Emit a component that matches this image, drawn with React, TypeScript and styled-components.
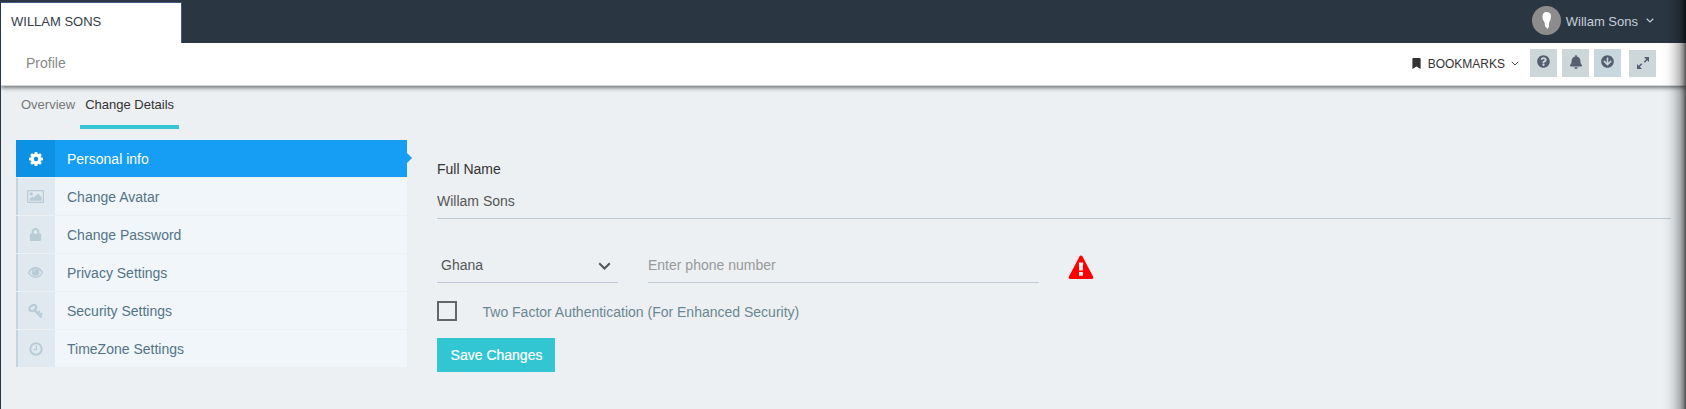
import React from "react";
import styled, { createGlobalStyle } from "styled-components";
import { FaBell, FaArrowCircleDown, FaQuestionCircle, FaLock, FaBookmark } from "react-icons/fa";

const GlobalStyle = createGlobalStyle`
  * { box-sizing: border-box; }
  body {
    margin: 0;
    overflow: hidden;
    font-family: "Liberation Sans", Arial, sans-serif;
    font-size: 14px;
    background: #ecf0f3;
  }
`;

const Page = styled.div`
  position: relative;
  height: 409px;
  border-left: 1px solid #2b3643;
  overflow: hidden;
`;

const TopBar = styled.header`
  position: relative;
  z-index: 1;
  display: flex;
  justify-content: space-between;
  height: 43px;
  background: #2b3643;
`;

const AccountTab = styled.div`
  width: 181px;
  height: 41px;
  margin-top: 2px;
  padding: 11px 10px 0;
  border: 1px solid #3f5b82;
  border-width: 1px 1px 0 0;
  background: #fff;
  color: #333c48;
  font-size: 13px;
  line-height: 15px;
`;

const UserMenu = styled.div`
  display: flex;
  align-items: center;
  height: 41px;
  margin-right: 32px;
  color: #c6cfda;
  font-size: 13px;
  svg { display: block; }
`;

const UserName = styled.span`
  margin: 2px 8px 0 5px;
`;

const SubBar = styled.div`
  position: relative;
  display: flex;
  justify-content: space-between;
  height: 43px;
  padding-left: 25px;
  background: #fff;
  border-bottom: 1px solid #d5d8da;
  box-shadow: 0 2px 4px 0 rgba(0, 0, 0, 0.5);
`;

const Title = styled.h1`
  margin: 12px 0 0;
  color: #888;
  font-size: 14px;
  font-weight: 400;
  line-height: 16px;
`;

const Tools = styled.div`
  display: flex;
  margin-right: 30px;
`;

const Bookmarks = styled.div`
  display: flex;
  height: 41px;
  align-items: center;
  margin-right: 11px;
  color: #333;
  font-size: 12px;
  svg { display: block; }
`;

const BookmarksLabel = styled.span`
  margin: 1px 6px 0 6px;
`;

const ToolButton = styled.button<{ $tint?: string; $gap?: number; $drop?: number }>`
  display: flex;
  justify-content: center;
  padding: 6px 0 0;
  width: 27px;
  height: ${(p) => 28 - (p.$drop ?? 0)}px;
  margin: ${(p) => 6 + (p.$drop ?? 0)}px 0 0 ${(p) => p.$gap ?? 5}px;
  border: 0;
  background: ${(p) => p.$tint ?? "#cdd7da"};
  color: #555f70;
`;

const Tabs = styled.nav`
  display: flex;
  height: 54px;
  padding: 0 0 0 15px;
`;

const Tab = styled.a<{ $active?: boolean }>`
  height: 43px;
  padding: 11px 5px 0;
  border-bottom: 4px solid ${(p) => (p.$active ? "#36c6d3" : "transparent")};
  color: ${(p) => (p.$active ? "#333" : "#777")};
  font-size: 13px;
  line-height: 15px;
  white-space: nowrap;
  & + & {
    width: 99px;
  }
`;

const Content = styled.div`
  display: flex;
  padding-left: 15px;
`;

const Menu = styled.ul`
  width: 391px;
  margin: 0;
  padding: 0;
  list-style: none;
`;

const MenuItem = styled.li<{ $active?: boolean }>`
  position: relative;
  display: flex;
  height: 37px;
  margin-bottom: 1px;
  background: ${(p) => (p.$active ? "#169ef4" : "#f0f6fa")};
  color: ${(p) => (p.$active ? "#fff" : "#557386")};
  line-height: 38px;
  ${(p) =>
    p.$active &&
    `&::after {
      content: "";
      position: absolute;
      left: 100%;
      top: 13px;
      border: 5px solid transparent;
      border-right: 0;
      border-left-color: #169ef4;
    }`}
`;

const MenuIcon = styled.span<{ $active?: boolean }>`
  display: flex;
  align-items: center;
  justify-content: center;
  width: 39px;
  height: 37px;
  margin-right: 12px;
  padding-right: 2px;
  border-left: 2px solid ${(p) => (p.$active ? "#0c91e5" : "#c4d5df")};
  background: ${(p) => (p.$active ? "#0c91e5" : "#e0e9f0")};
  color: ${(p) => (p.$active ? "#fff" : "#b9cbd5")};
`;

const Form = styled.form`
  flex: 1;
  margin: 21px 15px 0 30px;
`;

const Label = styled.label`
  display: block;
  color: #333;
  line-height: 16px;
`;

const Input = styled.input`
  display: block;
  width: 100%;
  height: 34px;
  padding: 0 0 1px;
  border: 0;
  border-bottom: 1px solid #c2cad8;
  outline: 0;
  background: transparent;
  color: #555;
  font: inherit;
  &::placeholder { color: #999; opacity: 1; }
`;

const NameInput = styled(Input)`
  margin-top: 8px;
  border-bottom-color: #bdc9d5;
`;

const PhoneRow = styled.div`
  display: flex;
  margin-top: 30px;
`;

const Country = styled.div`
  display: flex;
  align-items: center;
  justify-content: space-between;
  width: 181px;
  height: 34px;
  margin-right: 30px;
  padding: 0 7px 1px 4px;
  border-bottom: 1px solid #c2c6d8;
  color: #555;
  svg { margin-top: 3px; }
`;

const PhoneField = styled.div`
  width: 391px;
  margin-right: 29px;
`;

const WarningIcon = styled.svg`
  display: block;
  margin-top: 6px;
`;

const TwoFactor = styled.div`
  display: flex;
  height: 20px;
  margin-top: 18px;
  color: #6b8790;
  line-height: 22px;
`;

const Checkbox = styled.span`
  width: 20px;
  height: 20px;
  margin-right: 25.5px;
  border: 2px solid #666;
`;

const SaveButton = styled.button`
  width: 118px;
  height: 34px;
  margin-top: 17px;
  padding: 0 0 0 1px;
  border: 0;
  background: #32c5d2;
  color: #fff;
  font: inherit;
  -webkit-text-stroke: 0.2px #fff;
`;

const EdgeShadow = styled.div`
  position: absolute;
  z-index: 2;
  top: 0;
  right: 0;
  bottom: 0;
  width: 24px;
  pointer-events: none;
  background: linear-gradient(
    to right,
    rgba(0, 0, 0, 0) 0%,
    rgba(0, 0, 0, 0.03) 25%,
    rgba(0, 0, 0, 0.12) 50%,
    rgba(0, 0, 0, 0.27) 75%,
    rgba(0, 0, 0, 0.43) 88%,
    rgba(0, 0, 0, 0.68) 100%
  );
`;

const Chevron = ({ size = 8, weight = 1.2 }: { size?: number; weight?: number }) => (
  <svg width={size} height={size * 0.65} viewBox="0 0 12 8" fill="none" stroke="currentColor" strokeWidth={(weight * 12) / size}>
    <path d="M1 1.2l5 5 5-5" />
  </svg>
);

const Avatar = () => (
  <svg width="29" height="29" viewBox="0 0 29 29">
    <circle cx="14.500" cy="14.500" r="14.500" fill="#8c8c8c" />
    <path d="M14.500 6c2.800 0 4.400 1.300 4.400 3.600 0 1.500.1 3-.6 4.600-.5 1.200-1.200 1.700-1.300 2.800v3.500l-1.500 2.500-2.400-2.800c-.4-1.500.1-2.500-.8-4.200-1-1.600-1.900-2.600-1.800-5.400C10.600 7.800 11.700 6 14.500 6z" fill="#fff" />
  </svg>
);

const ExpandIcon = () => (
  <svg width="12" height="13" viewBox="0 0 12 13" fill="currentColor">
    <path d="M7 1h5v5l-1.700-1.700-2.500 2.500-1.100-1.100 2.500-2.500z" />
    <path d="M5 13H0V8l1.700 1.700 2.500-2.500 1.100 1.100-2.500 2.500z" />
  </svg>
);

const GearIcon = () => (
  <svg width="14" height="14" viewBox="-7 -7 14 14" fill="currentColor">
    <circle r="3.800" fill="none" stroke="currentColor" strokeWidth="3.200" />
    {[0, 45, 90, 135, 180, 225, 270, 315].map((a) => (
      <path key={a} d="M-1.700-4.500L-1.300-7H1.300L1.700-4.500z" transform={`rotate(${a})`} />
    ))}
  </svg>
);

const PictureIcon = () => (
  <svg width="17" height="13" viewBox="0 0 17 13" fill="currentColor">
    <path fillRule="evenodd" d="M1.200 0h14.600Q17 0 17 1.200v10.600q0 1.200-1.200 1.200H1.200Q0 13 0 11.800V1.200Q0 0 1.200 0zm.3 1.200q-.3 0-.3.300v10q0 .3.300.3h14q.3 0 .3-.3v-10q0-.3-.3-.3z" />
    <circle cx="4.200" cy="3.900" r="1.700" />
    <path d="M2.500 10.800V9l2.800-2.800 1.500 1.500L11 3.500l3.700 3.700v3.600z" />
  </svg>
);

const EyeIcon = () => (
  <svg width="15" height="11" viewBox="0 0 15 11">
    <path d="M.7 5.500C2.300 2.400 4.700.8 7.500.8s5.200 1.600 6.800 4.700c-1.600 3.100-4 4.700-6.800 4.700S2.300 8.600.7 5.500z" fill="none" stroke="currentColor" strokeWidth="1.400" />
    <circle cx="7.500" cy="4.900" r="3.900" fill="currentColor" />
    <path d="M5.500 4.600c0-1.200.8-2 2-2" fill="none" stroke="#e0e9f0" strokeWidth=".7" strokeLinecap="round" />
  </svg>
);

const KeyIcon = () => (
  <svg width="15" height="14" viewBox="0 0 15 14" fill="none" stroke="currentColor" strokeWidth="2.200">
    <ellipse cx="4.800" cy="4" rx="3.700" ry="2.700" transform="rotate(-35 4.800 4)" />
    <path d="M6.600 5.400l6.600 6.800q.4.700-.4 1.100L6.200 6.800z" strokeWidth="1.200" fill="currentColor" />
    <path d="M10.200 8.900l1.700-1.700M12.200 11l1.900-1.900" strokeWidth="2.100" />
  </svg>
);

const ClockIcon = () => (
  <svg width="14" height="14" viewBox="0 0 14 14" fill="none" stroke="currentColor">
    <circle cx="7" cy="7" r="5.700" strokeWidth="2" />
    <path d="M7.400 3.600v4H4.500" strokeWidth="1.300" />
  </svg>
);

const sections: { label: string; icon: React.ReactNode; active?: boolean }[] = [
  { label: "Personal info", icon: <GearIcon />, active: true },
  { label: "Change Avatar", icon: <PictureIcon /> },
  { label: "Change Password", icon: <FaLock size={13} /> },
  { label: "Privacy Settings", icon: <EyeIcon /> },
  { label: "Security Settings", icon: <KeyIcon /> },
  { label: "TimeZone Settings", icon: <ClockIcon /> },
];

export default function App() {
  return (
    <>
      <GlobalStyle />
      <Page>
        <TopBar>
          <AccountTab>WILLAM SONS</AccountTab>
          <UserMenu>
            <Avatar />
            <UserName>Willam Sons</UserName>
            <Chevron />
          </UserMenu>
        </TopBar>
        <SubBar>
          <Title>Profile</Title>
          <Tools>
            <Bookmarks>
              <FaBookmark size={11} />
              <BookmarksLabel>BOOKMARKS</BookmarksLabel>
              <Chevron size={8} weight={0.9} />
            </Bookmarks>
            <ToolButton $gap={0} aria-label="Help"><FaQuestionCircle size={13} /></ToolButton>
            <ToolButton aria-label="Notifications"><FaBell size={14} /></ToolButton>
            <ToolButton $tint="#c8d6dd" aria-label="Download"><FaArrowCircleDown size={13} /></ToolButton>
            <ToolButton $gap={8} $drop={1} aria-label="Full screen"><ExpandIcon /></ToolButton>
          </Tools>
        </SubBar>
        <Tabs>
          <Tab>Overview</Tab>
          <Tab $active>Change Details</Tab>
        </Tabs>
        <Content>
          <Menu>
            {sections.map((s) => (
              <MenuItem key={s.label} $active={s.active}>
                <MenuIcon $active={s.active}>{s.icon}</MenuIcon>
                {s.label}
              </MenuItem>
            ))}
          </Menu>
          <Form>
            <Label>Full Name</Label>
            <NameInput defaultValue="Willam Sons" />
            <PhoneRow>
              <Country>
                Ghana
                <Chevron size={13} weight={2} />
              </Country>
              <PhoneField>
                <Input placeholder="Enter phone number" />
              </PhoneField>
              <WarningIcon width="26" height="24" viewBox="0 0 26 24">
                <path d="M13 0.500q.9 0 1.500 1L25.300 22q.5 1.800-1.300 1.900H2Q.2 23.800.7 22L11.500 1.500q.6-1 1.500-1z" fill="#f00" />
                <path d="M10.800 7.500h4.400l-.4 8h-3.600zM11 17h4v3.800h-4z" fill="#ecf0f3" />
              </WarningIcon>
            </PhoneRow>
            <TwoFactor>
              <Checkbox />
              Two Factor Authentication (For Enhanced Security)
            </TwoFactor>
            <SaveButton type="button">Save Changes</SaveButton>
          </Form>
        </Content>
        <EdgeShadow />
      </Page>
    </>
  );
}
